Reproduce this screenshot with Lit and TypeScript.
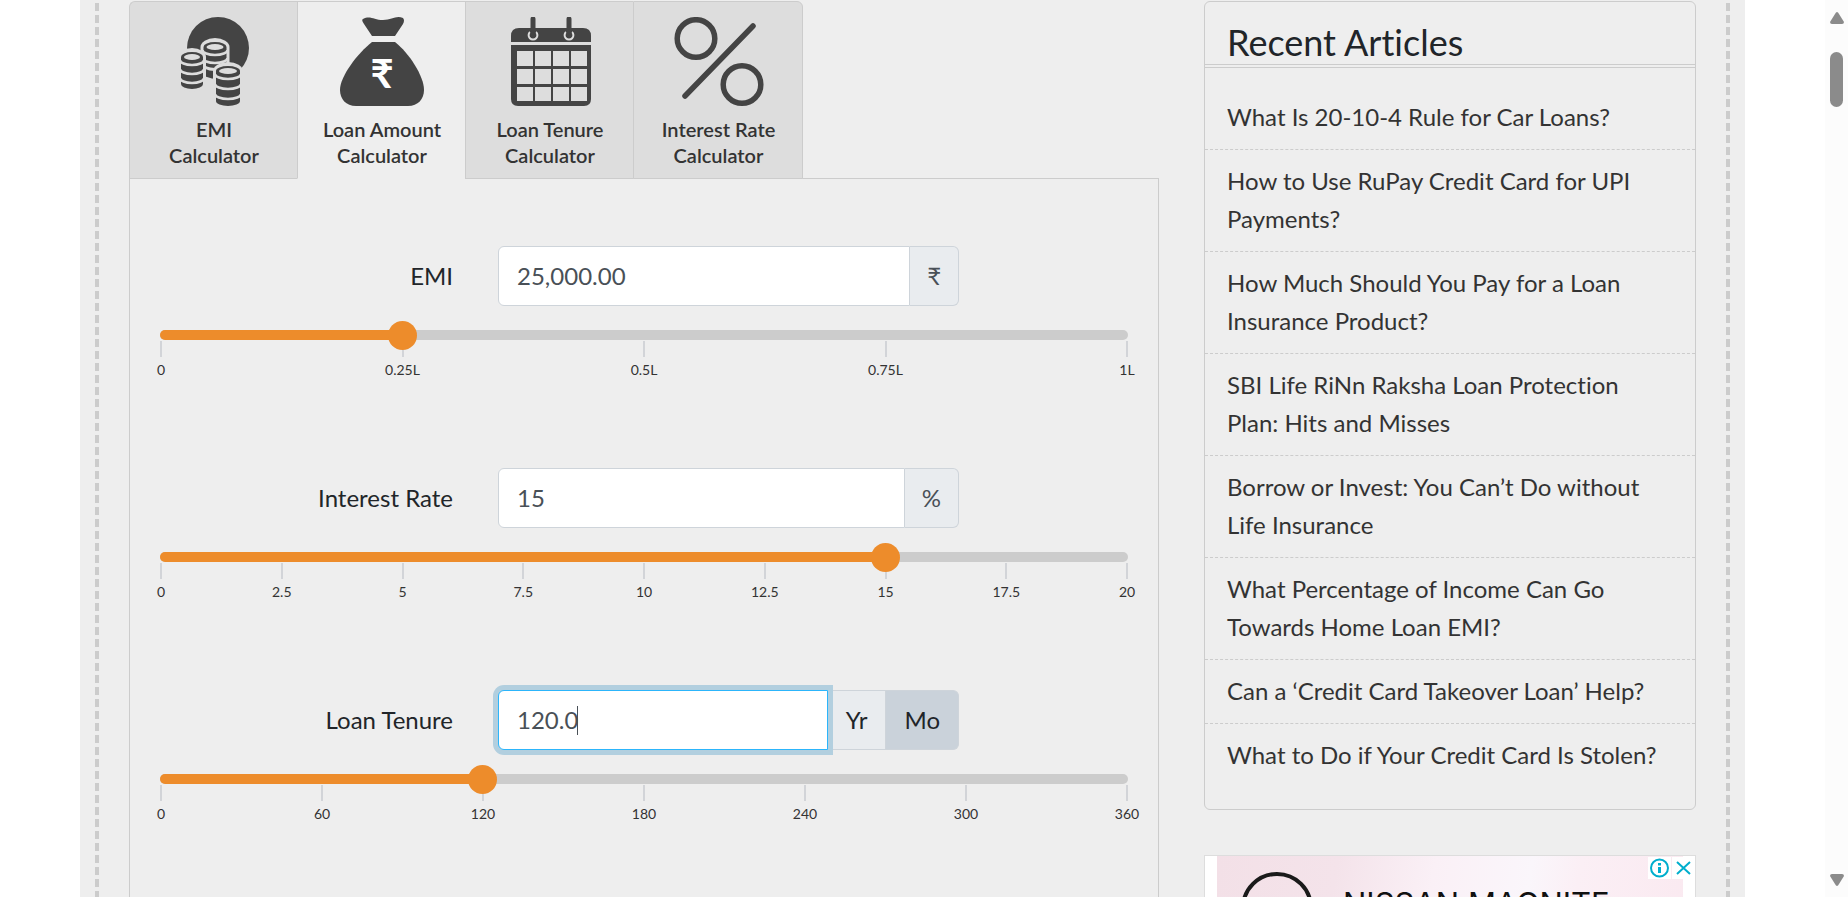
import { LitElement, html, css, svg } from "lit";
import { customElement, state } from "lit/decorators.js";

interface Field {
  id: string;
  label: string;
  value: string;
  min: number;
  max: number;
  step: number;
  position: number;
  unit?: string;
  ticks: string[];
}

const FIELDS: Field[] = [
  { id: "emi", label: "EMI", value: "25,000.00", min: 0, max: 100000, step: 500, position: 25000, unit: "₹", ticks: ["0", "0.25L", "0.5L", "0.75L", "1L"] },
  { id: "rate", label: "Interest Rate", value: "15", min: 0, max: 20, step: 0.25, position: 15, unit: "%", ticks: ["0", "2.5", "5", "7.5", "10", "12.5", "15", "17.5", "20"] },
  { id: "tenure", label: "Loan Tenure", value: "120.0", min: 0, max: 360, step: 1, position: 120, ticks: ["0", "60", "120", "180", "240", "300", "360"] },
];

const ARTICLES = [
  "What Is 20-10-4 Rule for Car Loans?",
  "How to Use RuPay Credit Card for UPI Payments?",
  "How Much Should You Pay for a Loan Insurance Product?",
  "SBI Life RiNn Raksha Loan Protection Plan: Hits and Misses",
  "Borrow or Invest: You Can’t Do without Life Insurance",
  "What Percentage of Income Can Go Towards Home Loan EMI?",
  "Can a ‘Credit Card Takeover Loan’ Help?",
  "What to Do if Your Credit Card Is Stolen?",
];

const coinStack = (x: number, y: number, rx: number, coins: number, step: number) => {
  const ry = 5;
  const bottom = y + coins * step;
  const seams = Array.from({ length: coins }, (_, i) => y + 3 + i * step);
  return svg`
    <path d="M${x - rx - 3} ${y}a${rx + 3} ${ry + 4} 0 0 1 ${2 * rx + 6} 0V${bottom}a${rx + 3} ${ry + 3} 0 0 1 ${-2 * rx - 6} 0z" fill="#ddd"/>
    <path d="M${x - rx} ${y}a${rx} ${ry} 0 0 1 ${2 * rx} 0V${bottom}a${rx} ${ry} 0 0 1 ${-2 * rx} 0z" fill="#444"/>
    <ellipse cx="${x}" cy="${y}" rx="${rx - 3}" ry="${ry - 2}" fill="#ddd"/>
    ${seams.map((s) => svg`<path d="M${x - rx - 1} ${s}a${rx + 1} ${ry} 0 0 0 ${2 * rx + 2} 0" fill="none" stroke="#ddd" stroke-width="2.600"/>`)}`;
};

const ICONS = {
  coins: svg`
    <circle cx="49" cy="31" r="31" fill="#444"/>
    ${coinStack(46, 30, 11.5, 2, 8)}
    ${coinStack(23, 40, 11, 3, 9)}
    ${coinStack(59, 54, 12, 3, 10)}`,
  bag: svg`
    <path d="M26 2C33-2 37 3 46 3S59-2 66 1q2 2 0 6l-8 12H35L27 7q-3-4-1-5z" fill="#444"/>
    <path d="M35 25h23c14 11 29 34 29 48 0 9-6 16-16 16H19C9 89 3 82 3 73c0-14 18-37 32-48z" fill="#444"/>
    <text class="rupee" x="45" y="71" text-anchor="middle">₹</text>`,
  calendar: svg`
    <path d="M6 25v-6q0-8 8-8h64q8 0 8 8v6z" fill="#444"/>
    <path d="M6 28h80v54q0 7-7 7H13q-7 0-7-7z" fill="#444"/>
    <path d="M12 34h16v15H12zM30 34h16v15H30zM48 34h16v15H48zM66 34h16v15H66zM12 52h16v15H12zM30 52h16v15H30zM48 52h16v15H48zM66 52h16v15H66zM12 70h16v14H12zM30 70h16v14H30zM48 70h16v14H48zM66 70h16v14H66z" fill="#ddd"/>
    <path d="M25 15a4.400 4.400 0 1 0 6 0M61 15a4.400 4.400 0 1 0 6 0" fill="none" stroke="#ddd" stroke-width="2"/>
    <path d="M28 2V18M64 2V18" stroke="#444" stroke-width="5" stroke-linecap="round"/>`,
  percent: svg`
    <g fill="none" stroke="#444" stroke-width="5.500">
      <circle cx="22" cy="21.500" r="18.800"/><circle cx="68" cy="67.500" r="18.800"/>
      <path d="M11 79L79 9" stroke-linecap="round"/>
    </g>`,
};

const TABS = [
  { name: ["EMI", "Calculator"], icon: ICONS.coins },
  { name: ["Loan Amount", "Calculator"], icon: ICONS.bag },
  { name: ["Loan Tenure", "Calculator"], icon: ICONS.calendar },
  { name: ["Interest Rate", "Calculator"], icon: ICONS.percent },
];

@customElement("app-root")
export class AppRoot extends LitElement {
  @state() private activeTab = 1;

  static styles = css`
    :host {
      display: grid;
      grid-template-columns: minmax(0, 1fr) 23px;
      height: 100vh;
      overflow: hidden;
      background: #fff;
      color: #212529;
      font-family: Lato, "Noto Sans", sans-serif;
      font-size: 24px;
      font-variant-ligatures: none;
      line-height: 38px;
    }
    * { box-sizing: border-box; }
    a { color: inherit; text-decoration: none; }
    button, input { font: inherit; color: inherit; margin: 0; }
    .viewport { overflow: hidden; }
    .page {
      display: grid;
      grid-template-columns: 4px minmax(0, 1fr) 4px;
      gap: 30px;
      max-width: 1665px;
      min-height: 100vh;
      margin: 0 auto;
      padding: 0 15px;
      background: #eee;
    }
    .rail { background: repeating-linear-gradient(#eee 0 3px, #ccc 3px 11px, #eee 11px 12px); }
    .columns {
      display: grid;
      grid-template-columns: minmax(0, 1030fr) minmax(0, 492fr);
      gap: 45px;
      padding-top: 1px;
    }
    .calculator { display: flex; flex-direction: column; }
    .tabs { display: flex; z-index: 1; }
    .tab {
      display: flex;
      flex-direction: column;
      align-items: center;
      gap: 9px;
      width: 168px;
      padding: 15px 0 10px 1px;
      background: #ddd;
      border: 1px solid #ccc;
      border-right: 0;
      font-size: 20px;
      font-weight: 600;
      line-height: 26px;
      color: #333;
      cursor: pointer;
    }
    .tab:first-child { border-top-left-radius: 6px; }
    .tab:last-child { width: 170px; border-right: 1px solid #ccc; border-top-right-radius: 6px; }
    .tab.active { background: #eee; border-bottom-color: #eee; }
    .icon { display: block; width: 90px; height: 90px; }
    .rupee { font-size: 40px; font-weight: 700; fill: #fff; }
    .panel {
      flex: 1;
      margin-top: -1px;
      padding: 67px 30px 0;
      border: 1px solid #ccc;
    }
    .field { height: 222px; }
    .entry { display: grid; grid-template-columns: 293px 461px; gap: 45px; align-items: center; }
    .entry label { text-align: right; }
    .group { display: flex; height: 60px; }
    .box {
      flex: 1;
      min-width: 0;
      padding: 0 18px;
      border: 1px solid #ced4da;
      border-radius: 6px 0 0 6px;
      background: #fff;
      color: #495057;
      outline: 0;
    }
    .box.focused {
      z-index: 1;
      border-color: #2cb5fb;
      box-shadow: 0 0 0 5px #b2cfdf;
      background: linear-gradient(#495057, #495057) 78px 50% / 1px 29px no-repeat #fff;
    }
    .unit, .period {
      display: flex;
      align-items: center;
      padding: 0 17px;
      border: 1px solid #ced4da;
      border-left: 0;
      background: #e9ecef;
      color: #495057;
    }
    .period { padding: 0 18px; color: #212529; cursor: pointer; }
    .period.chosen { background: #cad2da; }
    .group > :last-child { border-radius: 0 6px 6px 0; }
    .slide { display: grid; position: relative; z-index: 1; align-items: center; height: 30px; margin-top: 14px; }
    .slide > * { grid-area: 1 / 1; }
    .track { height: 10px; border-radius: 5px; background: #ccc; overflow: hidden; }
    .fill { height: 10px; background: #ed8c2b; }
    .slider {
      appearance: none;
      width: calc(100% + 28px);
      height: 30px;
      margin: 0 -14px;
      background: none;
    }
    .slider::-webkit-slider-thumb {
      appearance: none;
      width: 29px;
      height: 29px;
      border-radius: 50%;
      background: #ed8c2b;
    }
    .scale { display: flex; justify-content: space-between; padding: 0 1px; margin-top: -9px; }
    .tick {
      display: flex;
      flex-direction: column;
      align-items: center;
      gap: 4px;
      width: 0;
      font-size: 14px;
      line-height: 18px;
      color: #333;
    }
    .tick::before { content: ""; width: 2px; height: 16px; background: #d2d4d8; }
    .sidebar { display: flex; flex-direction: column; gap: 45px; }
    .articles { border: 1px solid #ccc; border-radius: 6px; padding-bottom: 22px; }
    .articles h2 {
      margin: 0 0 18px;
      padding: 20px 22px 2px;
      border-bottom: 4px double #ccc;
      font-size: 36px;
      font-weight: 400;
      line-height: 40px;
    }
    .articles ul { list-style: none; margin: 0; padding: 0; }
    .articles li { padding: 12px 22px 13px; border-bottom: 1px dashed #ccc; color: #333; }
    .articles li:last-child { border-bottom: 0; }
    .advert { position: relative; padding: 0 12px; background: #fff; border: 1px solid #ddd; }
    .banner {
      display: flex;
      gap: 30px;
      align-items: flex-start;
      height: 120px;
      padding-left: 24px;
      background: linear-gradient(100deg, #f3e0e7, #f4e3ea 25%, #faf0f6 45%, #faf6fb 65%, #fbeff5 75%, #fae9f0);
      font-family: Inter, sans-serif;
      font-size: 31px;
      color: #111;
    }
    .badge { display: block; width: 72px; height: 72px; margin-top: 16px; }
    .brand { margin-top: 29px; white-space: nowrap; }
    .choices { position: absolute; top: 1px; right: 0; display: flex; gap: 1px; }
    .choices button { display: block; padding: 0; border: 0; background: #fff; width: 23px; height: 22px; }
    .choices svg { display: block; width: 23px; height: 22px; fill: none; stroke: #00aecd; stroke-width: 2; }
    .scrollbar {
      display: flex;
      flex-direction: column;
      align-items: center;
      padding: 12px 0 11px;
      background: #fcfcfc;
    }
    .arrow { width: 14px; height: 12px; fill: #8b8b8b; }
    .grip { width: 13px; height: 55px; margin: 28px 0 auto; border-radius: 7px; background: #8b8b8b; }
  `;

  private renderField(f: Field) {
    const share = (f.position - f.min) / (f.max - f.min);
    return html`
      <div class="field">
        <div class="entry">
          <label for=${f.id}>${f.label}</label>
          <div class="group">
            <input class="box ${f.unit ? "" : "focused"}" id=${f.id} type="text" .value=${f.value} />
            ${f.unit
              ? html`<span class="unit">${f.unit}</span>`
              : html`<button class="period" type="button">Yr</button><button class="period chosen" type="button">Mo</button>`}
          </div>
        </div>
        <div class="slide">
          <div class="track"><div class="fill" style="width:${share * 100}%"></div></div>
          <input class="slider" type="range" aria-label=${f.label} min=${f.min} max=${f.max} step=${f.step}
            .value=${String(f.position)} />
        </div>
        <div class="scale">${f.ticks.map((t) => html`<span class="tick">${t}</span>`)}</div>
      </div>`;
  }

  render() {
    return html`
      <div class="viewport">
        <div class="page">
          <div class="rail"></div>
          <div class="columns">
            <main class="calculator">
              <div class="tabs" role="tablist">
                ${TABS.map((t, i) => html`
                  <button class="tab ${i === this.activeTab ? "active" : ""}" type="button" role="tab"
                    aria-selected=${i === this.activeTab} @click=${() => (this.activeTab = i)}>
                    <svg class="icon" viewBox="0 0 90 90">${t.icon}</svg>
                    <span>${t.name[0]}<br />${t.name[1]}</span>
                  </button>`)}
              </div>
              <div class="panel">${FIELDS.map((f) => this.renderField(f))}</div>
            </main>
            <aside class="sidebar">
              <section class="articles">
                <h2>Recent Articles</h2>
                <ul>${ARTICLES.map((a) => html`<li><a href="#">${a}</a></li>`)}</ul>
              </section>
              <section class="advert">
                <div class="banner">
                  <svg class="badge" viewBox="0 0 72 72"><circle cx="36" cy="36" r="34" fill="none" stroke="#1a1a1a" stroke-width="4" /></svg>
                  <span class="brand">NISSAN MAGNITE</span>
                </div>
                <div class="choices">
                  <button type="button" aria-label="About this ad">
                    <svg viewBox="0 0 23 22"><circle cx="11.500" cy="11" r="8.500" /><path d="M11.500 10v6M11.500 6v2.500" stroke-width="3" /></svg>
                  </button>
                  <button type="button" aria-label="Close ad">
                    <svg viewBox="0 0 23 22"><path d="M5 5L18 17M18 5L5 17" /></svg>
                  </button>
                </div>
              </section>
            </aside>
          </div>
          <div class="rail"></div>
        </div>
      </div>
      <div class="scrollbar" aria-hidden="true">
        <svg class="arrow" viewBox="0 0 14 12"><path d="M7 0q1 0 2 2l5 8q0 2-2 2H2q-2 0-2-2l5-8q1-2 2-2z" /></svg>
        <div class="grip"></div>
        <svg class="arrow" viewBox="0 0 14 12"><path d="M7 12q1 0 2-2l5-8q0-2-2-2H2Q0 0 0 2l5 8q1 2 2 2z" /></svg>
      </div>`;
  }
}
